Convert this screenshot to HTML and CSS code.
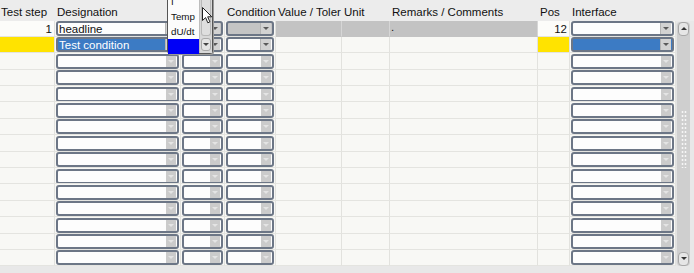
FILE: index.html
```html
<!DOCTYPE html>
<html lang="en">
<head>
    <meta charset="UTF-8">
    <title>Test steps</title>
    <link rel="stylesheet" href="styles.css">
</head>
<body>
    <div class="grid">
        <div class="head">
            <div class="hcell">Test step</div>
            <div class="hcell">Designation</div>
            <div class="hcell"></div>
            <div class="hcell">Condition</div>
            <div class="hcell">Value / Toler</div>
            <div class="hcell">Unit</div>
            <div class="hcell">Remarks / Comments</div>
            <div class="hcell">Pos</div>
            <div class="hcell">Interface</div>
        </div>
        <div class="body">
            <div class="rows" id="rows">
                <div class="row">
                    <div class="cell num white">1</div>
                    <div class="cell"><div class="combo"><span class="txt">headline</span><span class="btn on"></span></div></div>
                    <div class="cell"><div class="combo ro"><span class="txt"></span><span class="btn on"></span></div></div>
                    <div class="cell"><div class="combo ro"><span class="txt"></span><span class="btn on"></span></div></div>
                    <div class="cell gray"></div>
                    <div class="cell gray"></div>
                    <div class="cell gray"><span class="dot">.</span></div>
                    <div class="cell num white">12</div>
                    <div class="cell"><div class="combo"><span class="txt"></span><span class="btn on"></span></div></div>
                </div>
                <div class="row">
                    <div class="cell yellow"></div>
                    <div class="cell"><div class="combo sel"><span class="txt">Test condition</span><span class="btn on"></span></div></div>
                    <div class="cell"><div class="combo"><span class="txt"></span><span class="btn on"></span></div></div>
                    <div class="cell"><div class="combo"><span class="txt"></span><span class="btn on"></span></div></div>
                    <div class="cell"></div>
                    <div class="cell"></div>
                    <div class="cell"></div>
                    <div class="cell yellow"></div>
                    <div class="cell"><div class="combo sel"><span class="txt"></span><span class="btn on"></span></div></div>
                </div>
            </div>
            <div class="vscroll">
                <div class="sbtn up"></div>
                <div class="track"><div class="grip"></div></div>
                <div class="sbtn down"></div>
            </div>
        </div>
        <div class="foot"></div>

        <div class="popup">
            <div class="items">
                <div class="item">I</div>
                <div class="item">Temp</div>
                <div class="item">dU/dt</div>
                <div class="item picked"></div>
            </div>
            <div class="pscroll">
                <div class="pthumb"></div>
                <div class="pbtn"></div>
            </div>
        </div>
        <svg class="cursor" width="12" height="18" viewBox="0 0 12 18">
            <path d="M0.5 0.5 L0.5 13.5 L3.6 10.6 L5.8 15.8 L7.9 14.9 L5.7 9.8 L9.8 9.8 Z" fill="#fff" stroke="#222" stroke-width="1"/>
        </svg>
    </div>
    <script>
        // fill the remaining empty step rows
        const rows = document.getElementById('rows');
        const emptyCombo = '<div class="cell"><div class="combo"><span class="txt"></span><span class="btn"></span></div></div>';
        for (let i = 0; i < 13; i++) {
            rows.innerHTML += '<div class="row">'
                + '<div class="cell"></div>'
                + emptyCombo + emptyCombo + emptyCombo
                + '<div class="cell"></div><div class="cell"></div><div class="cell"></div><div class="cell"></div>'
                + emptyCombo
                + '</div>';
        }
    </script>
</body>
</html>
```

FILE: styles.css
```css
body {
    margin: 0;
    font-family: "Liberation Sans", Arial, sans-serif;
    font-size: 11.5px;
    color: #111;
    background-color: #e8e8e8;
}
.grid {
    position: relative;
    width: 694px;
    height: 273px;
    overflow: hidden;
}
.head,
.row {
    display: grid;
    grid-template-columns: 55px 126px 44px 51px 66px 48px 148px 32px 106px;
}
.head {
    height: 20.5px;
    background-color: #ececec;
}
.hcell {
    padding: 6px 0 0 2px;
    white-space: nowrap;
    overflow: hidden;
}
.hcell:first-child {
    padding-left: 1px;
}
.body {
    display: flex;
}
.rows {
    width: 676px;
    background-color: #f8f8f5;
}
.row {
    height: 16.4px;
}
.cell {
    box-sizing: border-box;
    border-right: 1px solid #e2e2de;
    border-bottom: 1px solid #e4e4e0;
    overflow: hidden;
}
.num {
    text-align: right;
    padding-right: 2px;
    line-height: 17px;
}
.white {
    background-color: #fcfcfa;
}
.gray {
    background-color: #c3c3c3;
    border-right-color: #d6d6d6;
    border-bottom-color: #c3c3c3;
}
.yellow {
    background-color: #ffe300;
}
.dot {
    display: block;
    line-height: 13px;
    padding-left: 1px;
}
.combo {
    display: flex;
    box-sizing: border-box;
    height: 15px;
    margin: 0.5px 1px 0 1px;
    border: 2px solid #6c7686;
    border-radius: 3px;
    background-color: #fdfdfd;
}
.combo .txt {
    flex: 1;
    padding-left: 1px;
    line-height: 12px;
    white-space: nowrap;
    overflow: hidden;
}
.combo .btn {
    width: 10px;
    margin: 0 1px 0 0;
    background-color: #cbcbcb;
    display: flex;
    align-items: center;
    justify-content: center;
}
.combo .btn::after {
    content: "";
    border-left: 3px solid transparent;
    border-right: 3px solid transparent;
    border-top: 3px solid #e4e4e4;
}
.combo .btn.on {
    background-color: #d2d2d2;
    border-left: 1px solid #b4b4b4;
}
.combo .btn.on::after {
    border-top-color: #5a5a5a;
}
.combo.ro {
    background-color: #c4c4c4;
}
.combo.sel {
    background-color: #3c7bc4;
    color: #fff;
}
.vscroll {
    width: 13px;
    margin-top: 1px;
    height: 244px;
    display: flex;
    flex-direction: column;
    background-color: #cfcfcf;
    border-left: 1px solid #e2e2e2;
    border-radius: 4px;
}
.sbtn {
    height: 12px;
    margin: 0 1px;
    border: 1px solid #a8a8a8;
    border-radius: 4px;
    background-color: #e6e6e6;
    display: flex;
    align-items: center;
    justify-content: center;
}
.sbtn.up::after {
    content: "";
    border-left: 3px solid transparent;
    border-right: 3px solid transparent;
    border-bottom: 3px solid #333;
}
.sbtn.down::after {
    content: "";
    border-left: 3px solid transparent;
    border-right: 3px solid transparent;
    border-top: 3px solid #333;
}
.track {
    flex: 1;
    display: flex;
    align-items: center;
    justify-content: center;
    padding-bottom: 10px;
}
.grip {
    width: 6px;
    height: 58px;
    background-image: radial-gradient(circle, #f6f6f6 0.9px, transparent 1.2px);
    background-size: 3px 4px;
}
.foot {
    height: 6px;
    background-color: #e8e8e8;
}
.popup {
    position: absolute;
    left: 167px;
    top: -8px;
    width: 46px;
    height: 62px;
    box-sizing: border-box;
    display: flex;
    background-color: #fcfcfc;
    border: 1px solid #555;
    border-radius: 0 0 3px 3px;
    box-shadow: 1px 1px 0 #999;
}
.items {
    flex: 1;
    font-size: 9.8px;
}
.item {
    height: 15px;
    line-height: 17px;
    padding-left: 3px;
}
.item.picked {
    background-color: #0000f6;
    margin-top: 0.5px;
}
.pscroll {
    width: 12px;
    display: flex;
    flex-direction: column;
    background-color: #d8d8d8;
    border-left: 1px solid #bdbdbd;
}
.pthumb {
    flex: 1;
    margin: 0 1px 2px;
    border: 1px solid #b8b8b8;
    border-top: none;
    border-radius: 0 0 3px 3px;
    background-color: #dedede;
}
.pbtn {
    height: 11px;
    margin: 0 1px 2px;
    border: 1px solid #a8a8a8;
    border-radius: 3px;
    background-color: #e4e4e4;
    display: flex;
    align-items: center;
    justify-content: center;
}
.pbtn::after {
    content: "";
    border-left: 3px solid transparent;
    border-right: 3px solid transparent;
    border-top: 3px solid #444;
}
.cursor {
    position: absolute;
    left: 202px;
    top: 7px;
}
```
